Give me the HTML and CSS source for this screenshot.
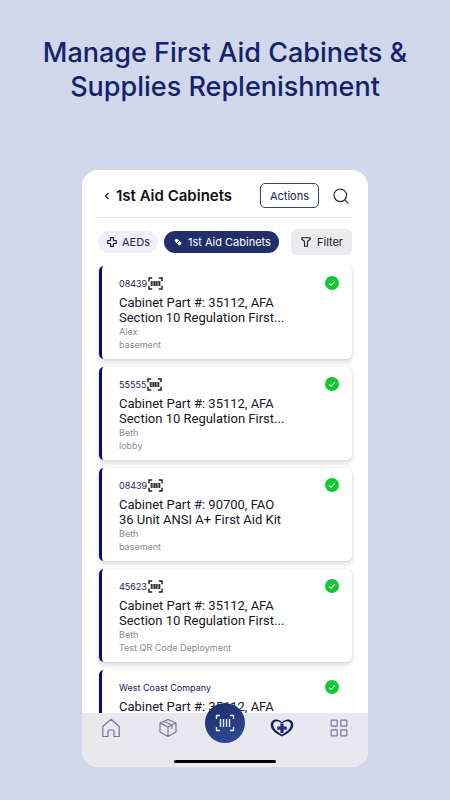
FILE: index.html
```html
<!DOCTYPE html>
<html lang="en">
<head>
<meta charset="utf-8">
<meta name="viewport" content="width=device-width, initial-scale=1">
<title>1st Aid Cabinets</title>
<link rel="stylesheet" href="styles.css">
</head>
<body>
<svg class="defs" aria-hidden="true">
  <symbol id="scan" viewBox="0 0 16 14">
    <path d="M1 4.500V1.200H4.500M11.500 1.200H15V4.500M15 9.500V12.800H11.500M4.500 12.800H1V9.500" fill="none" stroke="#222" stroke-width="1.600"/>
    <path d="M3.500 4.300v5.400M5.300 4.300v5.400M7.100 4.300v5.400M8.900 4.300v5.400M10.700 4.300v5.400M12.500 4.300v5.400" stroke="#333" stroke-width="1.400"/>
  </symbol>
  <symbol id="check" viewBox="0 0 14 14">
    <circle cx="7" cy="7" r="7" fill="#0fca31"/>
    <path d="M4 7.400L6 9.300L10 5.200" fill="none" stroke="#fff" stroke-width="1.100"/>
  </symbol>
</svg>
<h1 class="headline">Manage First Aid Cabinets &amp; Supplies Replenishment</h1>
<main class="phone">
  <header class="topbar">
    <button class="plain back" aria-label="Back"><svg width="6" height="8" viewBox="0 0 6 8"><path d="M4.500 1L1.500 4L4.500 7" fill="none" stroke="#222" stroke-width="1.200"/></svg></button>
    <h2 class="title">1st Aid Cabinets</h2>
    <button class="actions">Actions</button>
    <button class="plain search" aria-label="Search"><svg width="16" height="16" viewBox="0 0 16 16" fill="none" stroke="#222" stroke-width="1.100"><circle cx="7.300" cy="7.300" r="6.300"/><path d="M11.800 11.800L15.300 15.300"/></svg></button>
  </header>
  <div class="filters">
    <button class="pill"><svg width="10" height="10" viewBox="0 0 10 10"><path d="M3.500 .7h3v2.800h2.800v3H6.500v2.800h-3V6.500H.7v-3h2.800z" fill="none" stroke="#1b2450" stroke-width="1.200" stroke-linejoin="round"/></svg>AEDs</button>
    <button class="pill active"><svg width="10" height="10" viewBox="0 0 10 10"><path d="M3.500 3.500L6.500 6.500" stroke="#fff" stroke-width="3.400" stroke-linecap="round"/><path d="M3.400 6.600L6.600 3.400" stroke="#21306b" stroke-width="1"/></svg>1st Aid Cabinets</button>
    <button class="filter"><svg width="10" height="10" viewBox="0 0 10 10"><path d="M.7 .7h8.600v1.300L6.500 4.500v4.700H3.500V4.500L.7 2z" fill="none" stroke="#222" stroke-width="1.100" stroke-linejoin="round"/></svg>Filter</button>
  </div>
  <div class="list">
    <article class="card"><svg class="status" role="img" aria-label="OK"><use href="#check"/></svg><p class="code">08439<svg class="scan"><use href="#scan"/></svg></p><h3 class="name">Cabinet Part #: 35112, AFA<br>Section 10 Regulation First...</h3><p class="meta">Alex</p><p class="meta">basement</p></article>
    <article class="card"><svg class="status" role="img" aria-label="OK"><use href="#check"/></svg><p class="code">55555<svg class="scan"><use href="#scan"/></svg></p><h3 class="name">Cabinet Part #: 35112, AFA<br>Section 10 Regulation First...</h3><p class="meta">Beth</p><p class="meta">lobby</p></article>
    <article class="card"><svg class="status" role="img" aria-label="OK"><use href="#check"/></svg><p class="code">08439<svg class="scan"><use href="#scan"/></svg></p><h3 class="name">Cabinet Part #: 90700, FAO<br>36 Unit ANSI A+ First Aid Kit</h3><p class="meta">Beth</p><p class="meta">basement</p></article>
    <article class="card"><svg class="status" role="img" aria-label="OK"><use href="#check"/></svg><p class="code">45623<svg class="scan"><use href="#scan"/></svg></p><h3 class="name">Cabinet Part #: 35112, AFA<br>Section 10 Regulation First...</h3><p class="meta">Beth</p><p class="meta">Test QR Code Deployment</p></article>
    <article class="card last"><svg class="status" role="img" aria-label="OK"><use href="#check"/></svg><p class="code">West Coast Company</p><h3 class="name">Cabinet Part #: 35112, AFA</h3></article>
  </div>
  <nav class="tabbar">
    <div class="tabs">
      <a href="#home" aria-label="Home"><svg width="20" height="20" viewBox="0 0 20 20" fill="none" stroke="#77739a" stroke-width="1.200" stroke-linejoin="round"><path d="M1.800 8.500L10 1.300L18.200 8.500V18.500H13V13.500Q13 12 11.500 12H8.500Q7 12 7 13.500V18.500H1.800z"/></svg></a>
      <a href="#supplies" aria-label="Supplies"><svg width="20" height="20" viewBox="0 0 20 20" fill="none" stroke="#77739a" stroke-width="1.200" stroke-linejoin="round"><path d="M10 1.500L18 5V14L10 18.500L2 14V5zM2 5L10 9L18 5M10 9V18.500M6 3.200L14 7V11"/></svg></a>
      <a class="scan-button" href="#scanner" aria-label="Scan"><svg width="20" height="18" viewBox="0 0 20 18" fill="none" stroke="#e8ecfa" stroke-width="1.400"><path d="M5 1.500H1.500V5M15 1.500h3.500V5M18.500 13v3.500H15M5 16.500H1.500V13M5.500 5v8M8.500 5v8M11.500 5v8M14.500 5v8"/></svg></a>
      <a href="#cabinets" aria-label="Cabinets"><svg width="24" height="20" viewBox="0 0 24 20"><path d="M12 18.500C5.500 15.500 .7 11.500 .7 7C.7 1.500 7.500 -.5 12 4.200C16.500 -.5 23.300 1.500 23.300 7C23.300 11.500 18.500 15.500 12 18.500zM12 16.500C16.500 14 20.800 10.500 20.800 7C20.800 3 15.500 1.800 12 6C8.500 1.800 3.200 3 3.200 7C3.200 10.500 7.500 14 12 16.500z" fill="#14205c" fill-rule="evenodd"/><path d="M12 5.500v9.500M7.200 10.200h9.600" stroke="#e9e8ee" stroke-width="5"/><path d="M12 5.500v9.500M7.200 10.200h9.600" stroke="#21357b" stroke-width="3.200"/></svg></a>
      <a href="#more" aria-label="More"><svg width="18" height="18" viewBox="0 0 18 18" fill="none" stroke="#77739a" stroke-width="1.200"><rect x="1.200" y="1.200" width="6" height="6" rx=".6"/><rect x="10.800" y="1.200" width="6" height="6" rx=".6"/><rect x="1.200" y="10.800" width="6" height="6" rx=".6"/><rect x="10.800" y="10.800" width="6" height="6" rx=".6"/></svg></a>
    </div>
    <div class="home-indicator"></div>
  </nav>
</main>
</body>
</html>
```
FILE: styles.css
```css
* { box-sizing: border-box; }
body {
  margin: 0;
  min-height: 100vh;
  padding: 36px 24px 33px;
  display: flex;
  flex-direction: column;
  background: #d1d8eb;
  color: #151629;
  font-family: Inter, "Liberation Sans", sans-serif;
}
h1, h2, h3, p { margin: 0; }
button { font: inherit; cursor: pointer; }
svg { display: block; flex: none; }
.defs { position: absolute; width: 0; height: 0; }
.headline {
  color: #14236b;
  font-size: 27px;
  font-weight: 500;
  line-height: 34px;
  text-align: center;
}
.phone {
  width: 72%;
  min-width: 286px;
  max-width: 286px;
  margin: 66px auto 0;
  display: flex;
  flex-direction: column;
  background: #fff;
  border-radius: 16px;
}
.topbar {
  margin: 0 15px;
  padding: 13px 4px 9px 5px;
  display: flex;
  align-items: center;
  border-bottom: 1px solid #e8e8ec;
}
.plain { padding: 0; border: 0; background: none; }
.back { padding: 4px 2px; }
.title { margin: 0 auto 0 4px; font-size: 15px; font-weight: 600; color: #111; white-space: nowrap; }
.actions {
  height: 25px;
  padding: 0 9px;
  border: 1px solid #34406f;
  border-radius: 5px;
  background: #fff;
  color: #17205a;
  font-size: 11px;
}
.search { margin-left: 14px; }
.filters { padding: 11px 16px; display: flex; align-items: center; }
.pill, .filter {
  display: flex;
  align-items: center;
  gap: 5px;
  border: 0;
  font-size: 11px;
  white-space: nowrap;
}
.pill { height: 22px; padding: 0 8px 0 9px; margin-right: 6px; border-radius: 11px; background: #f2effb; color: #1b2450; }
.active { background: #21306b; color: #fff; }
.filter { height: 26px; margin-left: auto; padding: 0 9px 0 10px; gap: 6px; border-radius: 6px; background: #ebeaef; color: #222; }
.list { padding: 0 16px 0 17px; display: flex; flex-direction: column; gap: 8px; }
.card {
  position: relative;
  padding: 10px 40px 8px 17px;
  border-left: 3px solid #0b087a;
  border-radius: 5px;
  box-shadow: 0 3px 5px #00000026, 0 0 1px #00000030;
}
.status { position: absolute; top: 10px; right: 13px; width: 14px; height: 14px; }
.code { display: flex; align-items: center; gap: 1px; height: 14px; font-size: 9px; color: #17235c; }
.scan { width: 15px; height: 13px; }
.name { margin-top: 5px; font-family: Roboto, Inter, sans-serif; font-size: 13px; font-weight: 400; line-height: 15px; white-space: nowrap; }
.meta { font-size: 9px; line-height: 13px; color: #8b8b95; }
.last { padding-bottom: 0; border-radius: 5px 5px 0 0; box-shadow: 0 0 1px #00000030; }
.last .name { height: 14px; }
.tabbar { position: relative; padding: 5px 0 4px; border-radius: 0 0 16px 16px; background: #e9e8ee; }
.tabs { display: grid; grid-template: 20px / repeat(5, 1fr); justify-items: center; align-items: center; }
.tabs a { display: block; }
.tabs .scan-button {
  display: grid;
  place-items: center;
  width: 40px;
  height: 40px;
  margin-top: -10px;
  border-radius: 50%;
  background: linear-gradient(160deg, #1c2b67, #304e9b);
}
.home-indicator { width: 102px; height: 3px; margin: 22px auto 0; border-radius: 2px; background: #000; }
```
